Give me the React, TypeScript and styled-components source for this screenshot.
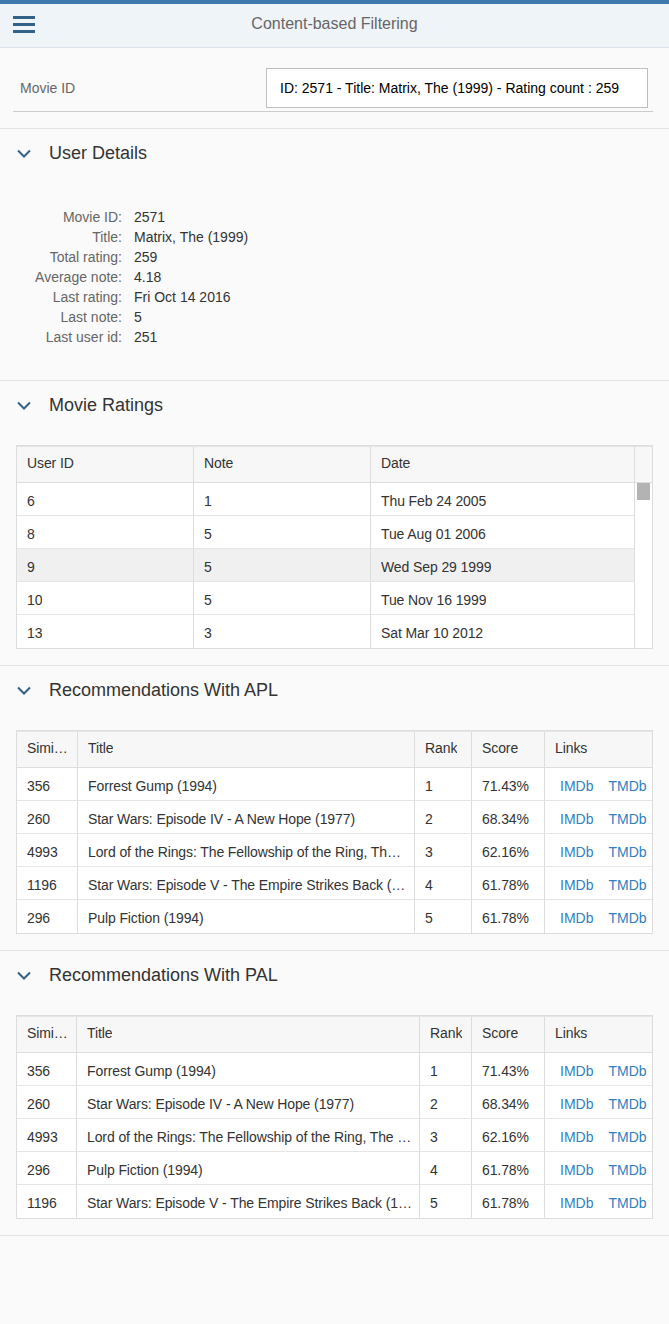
import React from "react";
import styled, { createGlobalStyle } from "styled-components";

const GlobalStyle = createGlobalStyle`
  html, body { margin: 0; padding: 0; background: #fafafa; }
  body { font-family: "Liberation Sans", Arial, sans-serif; color: #333; }
  * { box-sizing: border-box; }
`;

const Page = styled.div`
  min-height: 1324px;
  background: #fafafa;
  display: flex;
  flex-direction: column;
`;

const TopBar = styled.header`
  border-top: 4px solid #3f78ab;
  height: 48px;
  padding-bottom: 4px;
  background: #eff4f9;
  border-bottom: 1px solid #d9e1ea;
  display: flex;
  align-items: center;
`;

const MenuButton = styled.button`
  background: none;
  border: none;
  padding: 0;
  margin-left: 13px;
  width: 22px;
  height: 22px;
  display: flex;
  align-items: center;
  justify-content: center;
  cursor: pointer;
`;

const TopTitle = styled.h1`
  flex: 1;
  margin: 0 0 0 -35px;
  text-align: center;
  font-size: 16px;
  font-weight: normal;
  color: #666;
`;

const Section = styled.section`
  border-bottom: 1px solid #e5e5e5;
`;

const FormRow = styled.div`
  margin: 20px 16px 16px 13px;
  padding-bottom: 3px;
  border-bottom: 1px solid #cccccc;
  display: flex;
  align-items: center;
`;

const FieldLabel = styled.label`
  padding-left: 7px;
  font-size: 14px;
  color: #666;
`;

const FieldBox = styled.div`
  margin-left: auto;
  margin-right: 5px;
  width: 382px;
  height: 40px;
  border: 1px solid #bfbfbf;
  background: #fff;
  display: flex;
  align-items: center;
  padding-left: 13px;
  font-size: 14px;
  color: #000;
  white-space: nowrap;
`;

const PanelHeader = styled.div`
  height: 48px;
  display: flex;
  align-items: center;
  padding-left: 17px;
  gap: 18px;
`;

const PanelTitle = styled.h2`
  margin: 0;
  font-size: 18px;
  font-weight: normal;
  color: #333;
  padding-top: 1px;
`;

const PanelBody = styled.div`
  padding: 16px;
`;

const DetailsGrid = styled.dl`
  margin: 14px 0 17px;
  display: grid;
  grid-template-columns: 106px 1fr;
  column-gap: 12px;
  font-size: 14px;
  line-height: 20px;
`;

const DetailLabel = styled.dt`
  text-align: right;
  color: #666;
  margin: 0;
`;

const DetailValue = styled.dd`
  margin: 0;
  color: #333;
`;

const TableFrame = styled.div`
  border: 1px solid #dddddd;
  background: #fff;
  display: flex;
`;

const TableMain = styled.div<{ $gutter?: boolean }>`
  flex: 1;
  min-width: 0;
  ${(p) => (p.$gutter ? "border-right: 1px solid #dddddd;" : "")}
`;

const Row = styled.div<{ $cols: string; $head?: boolean; $hover?: boolean }>`
  display: grid;
  grid-template-columns: ${(p) => p.$cols};
  height: ${(p) => (p.$head ? "37px" : "33px")};
  border-bottom: 1px solid ${(p) => (p.$head ? "#dddddd" : "#e5e5e5")};
  background: ${(p) => (p.$head ? "#f7f7f7" : p.$hover ? "#f0f0f0" : "#fff")};
  ${(p) => (p.$head ? "border-top: 1px solid #e5e5e5;" : "")}
  &:last-child { border-bottom: none; }
`;

const Cell = styled.div<{ $head?: boolean }>`
  padding: ${(p) => (p.$head ? "0 7px 3px 10px" : "3px 7px 0 10px")};
  display: flex;
  align-items: center;
  font-size: 14px;
  color: #333;
  border-right: 1px solid #dddddd;
  min-width: 0;
  &:last-child { border-right: none; }
`;

const CellText = styled.span`
  white-space: nowrap;
  overflow: hidden;
  text-overflow: ellipsis;
  min-width: 0;
  letter-spacing: -0.1px;
`;

const LinksCell = styled(Cell)`
  padding-left: 15px;
  gap: 15px;
`;

const Link = styled.a`
  color: #2f7fc1;
  text-decoration: none;
  font-size: 14px;
`;

const Gutter = styled.div`
  width: 17px;
  display: flex;
  flex-direction: column;
`;

const GutterHead = styled.div`
  height: 37px;
  background: #f7f7f7;
  border-top: 1px solid #e5e5e5;
  border-bottom: 1px solid #dddddd;
`;

const GutterTrack = styled.div`
  flex: 1;
  background: #fff;
  padding: 0 2px;
`;

const Thumb = styled.div`
  height: 17px;
  background: #b3b3b3;
`;

const Chevron = () => (
  <svg width="14" height="9" viewBox="0 0 14 9" aria-hidden>
    <path d="M1 1.5 L7 7.5 L13 1.5" fill="none" stroke="#346187" strokeWidth="2" />
  </svg>
);

const Hamburger = () => (
  <svg width="22" height="18" viewBox="0 0 22 18" aria-hidden>
    <rect x="0" y="1" width="22" height="3" fill="#346187" />
    <rect x="0" y="8" width="22" height="3" fill="#346187" />
    <rect x="0" y="15" width="22" height="3" fill="#346187" />
  </svg>
);

const Panel: React.FC<{ title: string; children: React.ReactNode }> = ({ title, children }) => (
  <Section>
    <PanelHeader>
      <Chevron />
      <PanelTitle>{title}</PanelTitle>
    </PanelHeader>
    <PanelBody>{children}</PanelBody>
  </Section>
);

const details: [string, string][] = [
  ["Movie ID:", "2571"],
  ["Title:", "Matrix, The (1999)"],
  ["Total rating:", "259"],
  ["Average note:", "4.18"],
  ["Last rating:", "Fri Oct 14 2016"],
  ["Last note:", "5"],
  ["Last user id:", "251"],
];

const ratings: [string, string, string][] = [
  ["6", "1", "Thu Feb 24 2005"],
  ["8", "5", "Tue Aug 01 2006"],
  ["9", "5", "Wed Sep 29 1999"],
  ["10", "5", "Tue Nov 16 1999"],
  ["13", "3", "Sat Mar 10 2012"],
];

type Rec = [string, string, string, string];

const apl: Rec[] = [
  ["356", "Forrest Gump (1994)", "1", "71.43%"],
  ["260", "Star Wars: Episode IV - A New Hope (1977)", "2", "68.34%"],
  ["4993", "Lord of the Rings: The Fellowship of the Ring, The (2001)", "3", "62.16%"],
  ["1196", "Star Wars: Episode V - The Empire Strikes Back (1980)", "4", "61.78%"],
  ["296", "Pulp Fiction (1994)", "5", "61.78%"],
];

const pal: Rec[] = [
  ["356", "Forrest Gump (1994)", "1", "71.43%"],
  ["260", "Star Wars: Episode IV - A New Hope (1977)", "2", "68.34%"],
  ["4993", "Lord of the Rings: The Fellowship of the Ring, The (2001)", "3", "62.16%"],
  ["296", "Pulp Fiction (1994)", "4", "61.78%"],
  ["1196", "Star Wars: Episode V - The Empire Strikes Back (1980)", "5", "61.78%"],
];

const RecTable: React.FC<{ cols: string; rows: Rec[] }> = ({ cols, rows }) => (
  <TableFrame>
    <TableMain>
      <Row $cols={cols} $head>
        <Cell $head><CellText>Similarity</CellText></Cell>
        <Cell $head><CellText>Title</CellText></Cell>
        <Cell $head><CellText>Rank</CellText></Cell>
        <Cell $head><CellText>Score</CellText></Cell>
        <Cell $head><CellText>Links</CellText></Cell>
      </Row>
      {rows.map((r) => (
        <Row $cols={cols} key={r[0]}>
          <Cell><CellText>{r[0]}</CellText></Cell>
          <Cell><CellText>{r[1]}</CellText></Cell>
          <Cell><CellText>{r[2]}</CellText></Cell>
          <Cell><CellText>{r[3]}</CellText></Cell>
          <LinksCell>
            <Link href="#">IMDb</Link>
            <Link href="#">TMDb</Link>
          </LinksCell>
        </Row>
      ))}
    </TableMain>
  </TableFrame>
);

const ratingCols = "177px 177px 1fr";

export default function App() {
  return (
    <Page>
      <GlobalStyle />
      <TopBar>
        <MenuButton aria-label="Menu">
          <Hamburger />
        </MenuButton>
        <TopTitle>Content-based Filtering</TopTitle>
      </TopBar>

      <Section>
        <FormRow>
          <FieldLabel>Movie ID</FieldLabel>
          <FieldBox>ID: 2571 - Title: Matrix, The (1999) - Rating count : 259</FieldBox>
        </FormRow>
      </Section>

      <Panel title="User Details">
        <DetailsGrid>
          {details.map(([k, v]) => (
            <React.Fragment key={k}>
              <DetailLabel>{k}</DetailLabel>
              <DetailValue>{v}</DetailValue>
            </React.Fragment>
          ))}
        </DetailsGrid>
      </Panel>

      <Panel title="Movie Ratings">
        <TableFrame>
          <TableMain $gutter>
            <Row $cols={ratingCols} $head>
              <Cell $head><CellText>User ID</CellText></Cell>
              <Cell $head><CellText>Note</CellText></Cell>
              <Cell $head><CellText>Date</CellText></Cell>
            </Row>
            {ratings.map((r) => (
              <Row $cols={ratingCols} key={r[0]} $hover={r[0] === "9"}>
                <Cell><CellText>{r[0]}</CellText></Cell>
                <Cell><CellText>{r[1]}</CellText></Cell>
                <Cell><CellText>{r[2]}</CellText></Cell>
              </Row>
            ))}
          </TableMain>
          <Gutter>
            <GutterHead />
            <GutterTrack>
              <Thumb />
            </GutterTrack>
          </Gutter>
        </TableFrame>
      </Panel>

      <Panel title="Recommendations With APL">
        <RecTable cols="61px 337px 57px 73px 1fr" rows={apl} />
      </Panel>

      <Panel title="Recommendations With PAL">
        <RecTable cols="60px 343px 52px 73px 1fr" rows={pal} />
      </Panel>
    </Page>
  );
}
